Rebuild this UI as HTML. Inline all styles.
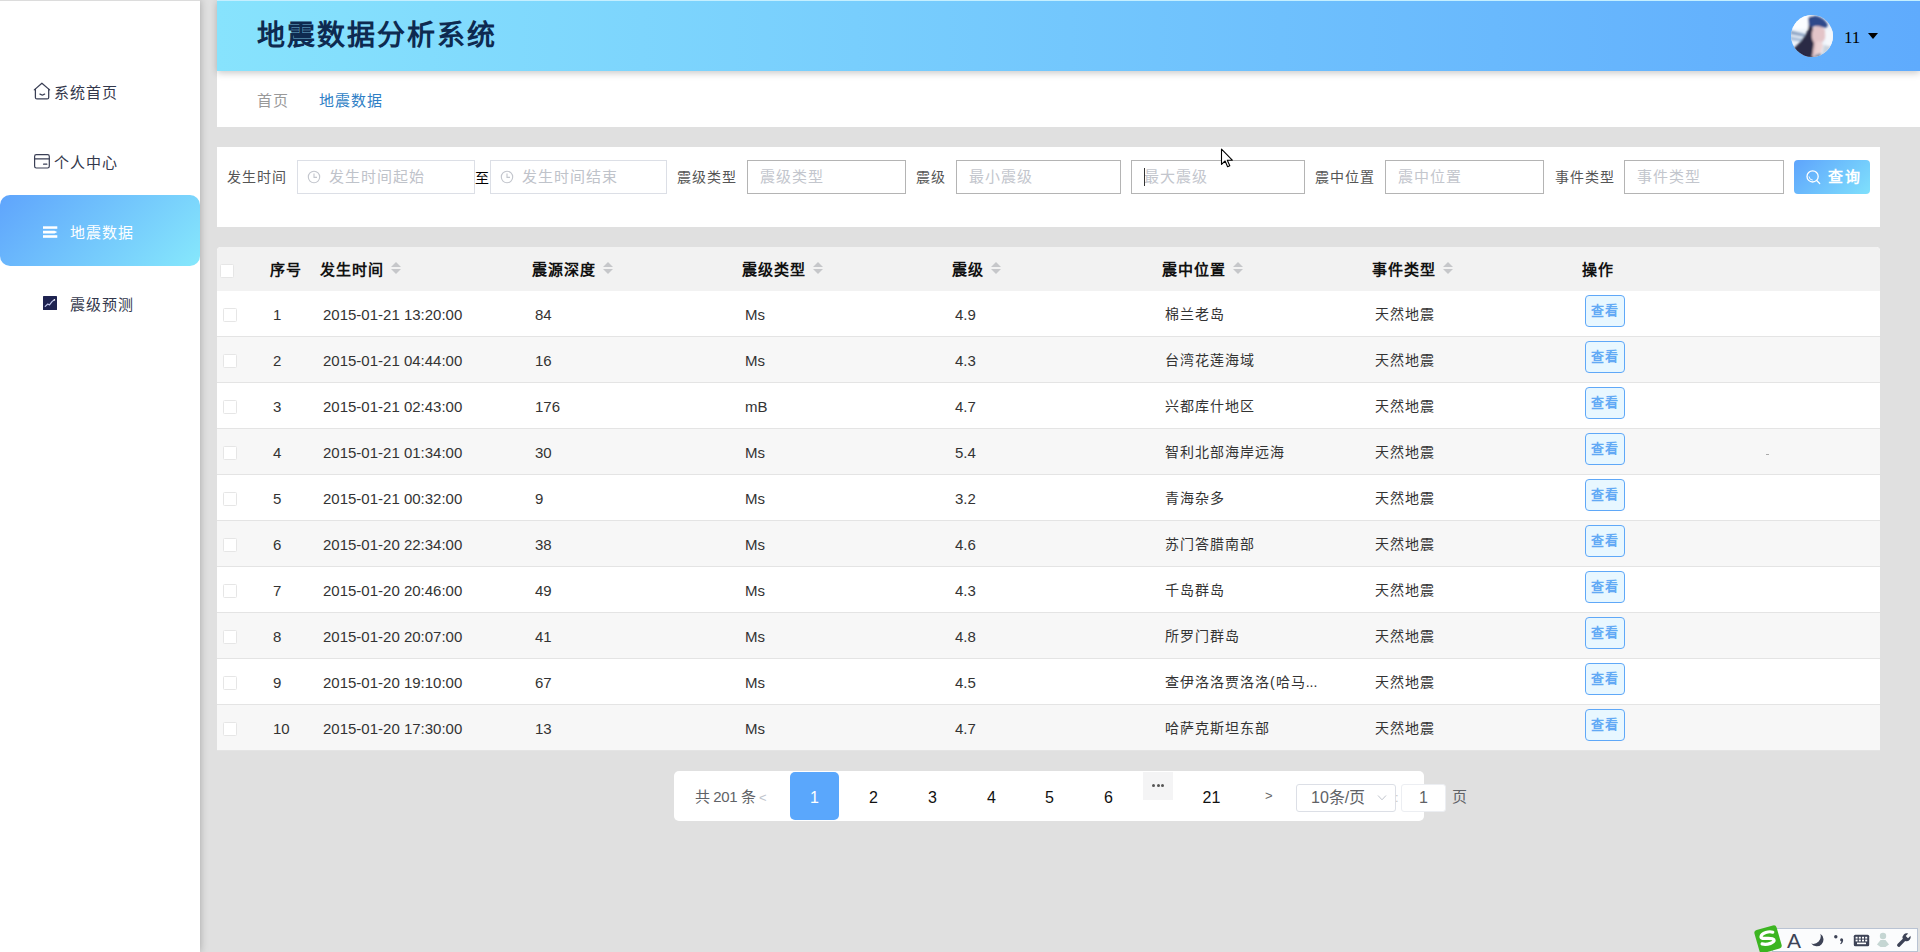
<!DOCTYPE html>
<html lang="zh-CN">
<head>
<meta charset="utf-8">
<title>地震数据分析系统</title>
<style>
*{box-sizing:border-box;margin:0;padding:0}
html,body{width:1920px;height:952px;overflow:hidden}
body{position:relative;background:#e0e0e0;font-family:"Liberation Sans",sans-serif;color:#333;font-size:15px}
.abs{position:absolute}
/* sidebar */
.side{position:absolute;left:0;top:0;width:200px;height:952px;background:#fff;box-shadow:0 0 8px rgba(0,0,0,.27)}
.side:before{content:'';position:absolute;left:0;top:0;width:200px;height:1px;background:#dcdcdc}
.mi{position:absolute;left:0;width:200px;height:71px;line-height:71px;font-size:15px;letter-spacing:1px;color:#33384c;white-space:nowrap}
.mi .tx{position:absolute;top:0}
.mi svg{position:absolute}
.mi.act{background:linear-gradient(135deg,#5fa4fc 0%,#86e8fc 100%);border-radius:10px;color:#fff}
/* header */
.hdr{position:absolute;left:217px;top:0;width:1703px;height:71px;background:linear-gradient(90deg,#87e3fd 0%,#5fabfd 100%);box-shadow:0 2px 7px rgba(0,0,0,.22);border-top:1px solid #c4efff;z-index:2}
.hdr .title{position:absolute;left:40px;top:0;height:70px;line-height:70px;font-size:28px;font-weight:bold;color:#0e2a50;white-space:nowrap;letter-spacing:2px}
.avatar{position:absolute;left:1574px;top:14px;width:42px;height:42px;border-radius:50%;overflow:hidden}
.uname{position:absolute;left:1627px;top:1px;line-height:72px;font-family:"Liberation Serif",serif;font-size:17px;color:#000}
.ucaret{position:absolute;left:1651px;top:32px;width:0;height:0;border-left:5px solid transparent;border-right:5px solid transparent;border-top:6.5px solid #000}
.crumb{position:absolute;left:217px;top:71px;width:1703px;height:56px;background:#fff;font-size:15px;letter-spacing:1px;line-height:60px;white-space:nowrap}
.crumb span{position:absolute;top:0}
/* search */
.search{position:absolute;left:217px;top:147px;width:1663px;height:80px;background:#fff}
.lbl{position:absolute;top:13px;height:34px;line-height:35px;font-size:14px;letter-spacing:1px;color:#555;white-space:nowrap}
.inp{position:absolute;top:13px;height:34px;border:1px solid #b4b4b4;background:#fff;line-height:32px;font-size:15px;letter-spacing:1px;color:#c3c6cd;padding-left:12px;white-space:nowrap;overflow:hidden}
.inp.date{border-color:#dcdfe6;padding-left:31px;line-height:31px;color:#bfc3ca}
.inp.date svg{position:absolute;left:9px;top:9px}
.qbtn{position:absolute;left:1577px;top:13px;width:76px;height:34px;border-radius:4px;background:linear-gradient(135deg,#5ea4fc 0%,#7fe0fc 100%);color:#fff;font-size:15px;letter-spacing:2px;font-weight:bold;line-height:34px;white-space:nowrap}
.qbtn svg{position:absolute;left:11px;top:9px}
.qbtn span{position:absolute;left:34px;top:0}
/* table */
.tbl{position:absolute;left:217px;top:247px;width:1663px;height:504px;background:#fff;border-radius:4px 4px 0 0;overflow:hidden}
.thead{position:absolute;left:0;top:0;width:100%;height:44px;background:#f2f2f2;line-height:46px;font-size:15px;letter-spacing:1px;font-weight:bold;color:#111}
.th{position:absolute;top:0;white-space:nowrap}
.sort{position:absolute;left:100%;top:0;margin-left:7px;width:10px;height:44px}
.sort b{position:absolute;left:0;width:0;height:0;border-left:5px solid transparent;border-right:5px solid transparent}
.sort .up{top:15px;border-bottom:5px solid #c6c7ca}
.sort .dn{top:22px;border-top:5px solid #c6c7ca}
.tr{position:absolute;left:0;width:100%;height:46px;border-bottom:1px solid #e4e4e4;line-height:47px;font-size:15px;color:#333;background:#fff}
.tr.odd{background:#f7f7f7}
.td{position:absolute;top:0;white-space:nowrap}
.td.cj{font-size:14px;letter-spacing:1px}
.td i{font-style:normal;letter-spacing:0}
.cb{position:absolute;width:14px;height:14px;border:1px solid #e6e6e6;background:#fff;border-radius:1.5px}
.hcb{left:3px;top:17px}
.rcb{left:6px;top:17px}
.btn-view{position:absolute;left:1368px;top:4px;width:40px;height:32px;border:1px solid #5fa8f8;border-radius:4px;background:#e8f7ff;color:#62a9f5;font-weight:bold;font-size:13px;letter-spacing:1px;line-height:30px;text-align:center}
/* pagination */
.pg{position:absolute;left:674px;top:771px;width:750px;height:50px;background:#fff;border-radius:5px}
.pgt{position:absolute;top:771px;height:50px;line-height:54px;font-size:16px;color:#111;white-space:nowrap;text-align:center}

</style>
</head>
<body>
<div class="side">
  <div class="mi" style="top:57px">
    <svg style="left:33px;top:25px" width="18" height="18" viewBox="0 0 18 18" fill="none" stroke="#3a3f55" stroke-width="1.25" stroke-linejoin="round" stroke-linecap="round"><path d="M1.300 7.900 8.900 1.200l7.700 6.700"/><path d="M2.400 7.200v8.200a1.500 1.500 0 0 0 1.500 1.500h10.300a1.500 1.500 0 0 0 1.500-1.500V7.200"/><path d="M6.900 12.100q2.400 1.900 4.800 0"/></svg>
    <span class="tx" style="left:54px">系统首页</span>
  </div>
  <div class="mi" style="top:128px">
    <svg style="left:33px;top:25px" width="18" height="17" viewBox="0 0 18 17" fill="none" stroke="#3a3f55" stroke-width="1.2" stroke-linejoin="round" stroke-linecap="round"><rect x="1.600" y="1.700" width="14.700" height="13.300" rx="1.700"/><path d="M1.600 5.900h14.700" stroke-width="1.400"/><path d="M10.600 11.200h3.200" stroke-width="1.300"/></svg>
    <span class="tx" style="left:54px;top:-1px">个人中心</span>
  </div>
  <div class="mi act" style="top:195px">
    <svg style="left:43px;top:31px" width="15" height="12" viewBox="0 0 15 12" fill="#fff"><rect x="0" y="0.300" width="14.300" height="2.500"/><path d="M0 4.700h11.500L14.300 6.100 11.500 7.500H0z"/><rect x="0" y="9.200" width="14.300" height="2.600"/></svg>
    <span class="tx" style="left:70px;top:2px">地震数据</span>
  </div>
  <div class="mi" style="top:269px">
    <svg style="left:43px;top:27px" width="14" height="14" viewBox="0 0 14 14"><rect x="0" y="0" width="14" height="14" rx=".6" fill="#1e2350"/><path d="M2.200 10.300 4.800 8l1.700.9 2.500-3.300 1.700-1.300" fill="none" stroke="#c3c9ee" stroke-width="1.100" stroke-linecap="round" stroke-linejoin="round"/><circle cx="11.400" cy="3.900" r=".8" fill="#fff"/></svg>
    <span class="tx" style="left:70px">震级预测</span>
  </div>
</div>
<div class="hdr">
  <div class="title">地震数据分析系统</div>
  <div class="avatar">
    <svg width="42" height="42" viewBox="0 0 42 42"><defs><filter id="bl" x="-10%" y="-10%" width="120%" height="120%"><feGaussianBlur stdDeviation="1.1"/></filter></defs><rect width="42" height="42" fill="#eef4fb"/><g filter="url(#bl)"><rect x="-2" y="-2" width="24" height="16" fill="#fbfdff"/><path d="M-2 15 14 19v3L-2 19z" fill="#8ea4c4"/><path d="M-2 21 13 24v3L-2 25z" fill="#a9bdd8"/><path d="M17 3c4-4 15-3 20 7l-2 3-11-2-6 3z" fill="#2f4a8a"/><path d="M18 10c-1 8-7 16-16 24l-3 10h24l1-18-2-13z" fill="#2b2a45"/><path d="M23 12c5-2 11 0 12 6 0 5-2 8-5 10l1 6-4 8h-6l2-14c-3-4-3-11 0-16z" fill="#e3c4c8"/><path d="M26 26c3 0 6 2 6 5l-3 9h-5z" fill="#ecd3d4"/><path d="M-2 34c8 3 16 6 22 10H-2z" fill="#161d45"/><path d="M34 16l10-2v30H32l3-10z" fill="#f5f8fc"/><path d="M33 30l10 2v12H30z" fill="#c9d3de"/><path d="M24 40l6-2v6h-7z" fill="#8a94a8"/></g></svg>
  </div>
  <div class="uname">11</div>
  <div class="ucaret"></div>
</div>
<div class="crumb"><span style="left:40px;color:#999">首页</span><span style="left:102px;color:#2f7fc6">地震数据</span></div>
<div class="search">
  <span class="lbl" style="left:10px">发生时间</span>
  <div class="inp date" style="left:80px;width:178px"><svg width="14" height="14" viewBox="0 0 14 14" fill="none" stroke="#c3c6cd" stroke-width="1.1"><circle cx="7" cy="7" r="5.7"/><path d="M7 3.6V7.4H10"/></svg>发生时间起始</div>
  <span class="lbl" style="left:258px;color:#000;font-size:14px;letter-spacing:0;line-height:37px">至</span>
  <div class="inp date" style="left:273px;width:177px"><svg width="14" height="14" viewBox="0 0 14 14" fill="none" stroke="#c3c6cd" stroke-width="1.1"><circle cx="7" cy="7" r="5.7"/><path d="M7 3.6V7.4H10"/></svg>发生时间结束</div>
  <span class="lbl" style="left:460px">震级类型</span>
  <div class="inp" style="left:530px;width:159px">震级类型</div>
  <span class="lbl" style="left:699px">震级</span>
  <div class="inp" style="left:739px;width:165px">最小震级</div>
  <div class="inp" style="left:914px;width:174px">最大震级<i style="position:absolute;left:12px;top:7px;width:1px;height:18px;background:#333"></i></div>
  <span class="lbl" style="left:1098px">震中位置</span>
  <div class="inp" style="left:1168px;width:159px">震中位置</div>
  <span class="lbl" style="left:1338px">事件类型</span>
  <div class="inp" style="left:1407px;width:160px">事件类型</div>
  <div class="qbtn"><svg width="18" height="18" viewBox="0 0 18 18" fill="none" stroke="#fff" stroke-width="1.300" stroke-linecap="round"><circle cx="7.600" cy="7.400" r="5.600"/><path d="M11.700 11.500 14.700 14.500"/><path d="M4 7.800a3.600 3.600 0 0 0 3.400 3.300" stroke-width=".9"/></svg><span>查询</span></div>
</div>
<div class="tbl">
<div class="thead"><span class="cb hcb"></span><span class="th" style="left:53px">序号</span><span class="th" style="left:103px">发生时间<i class="sort"><b class="up"></b><b class="dn"></b></i></span><span class="th" style="left:315px">震源深度<i class="sort"><b class="up"></b><b class="dn"></b></i></span><span class="th" style="left:525px">震级类型<i class="sort"><b class="up"></b><b class="dn"></b></i></span><span class="th" style="left:735px">震级<i class="sort"><b class="up"></b><b class="dn"></b></i></span><span class="th" style="left:945px">震中位置<i class="sort"><b class="up"></b><b class="dn"></b></i></span><span class="th" style="left:1155px">事件类型<i class="sort"><b class="up"></b><b class="dn"></b></i></span><span class="th" style="left:1365px">操作</span></div>
<div class="tr" style="top:44px"><span class="cb rcb"></span><span class="td" style="left:56px">1</span><span class="td" style="left:106px">2015-01-21 13:20:00</span><span class="td" style="left:318px">84</span><span class="td" style="left:528px">Ms</span><span class="td" style="left:738px">4.9</span><span class="td cj" style="left:948px">棉兰老岛</span><span class="td cj" style="left:1158px">天然地震</span><span class="btn-view">查看</span></div>
<div class="tr odd" style="top:90px"><span class="cb rcb"></span><span class="td" style="left:56px">2</span><span class="td" style="left:106px">2015-01-21 04:44:00</span><span class="td" style="left:318px">16</span><span class="td" style="left:528px">Ms</span><span class="td" style="left:738px">4.3</span><span class="td cj" style="left:948px">台湾花莲海域</span><span class="td cj" style="left:1158px">天然地震</span><span class="btn-view">查看</span></div>
<div class="tr" style="top:136px"><span class="cb rcb"></span><span class="td" style="left:56px">3</span><span class="td" style="left:106px">2015-01-21 02:43:00</span><span class="td" style="left:318px">176</span><span class="td" style="left:528px">mB</span><span class="td" style="left:738px">4.7</span><span class="td cj" style="left:948px">兴都库什地区</span><span class="td cj" style="left:1158px">天然地震</span><span class="btn-view">查看</span></div>
<div class="tr odd" style="top:182px"><span class="cb rcb"></span><span class="td" style="left:56px">4</span><span class="td" style="left:106px">2015-01-21 01:34:00</span><span class="td" style="left:318px">30</span><span class="td" style="left:528px">Ms</span><span class="td" style="left:738px">5.4</span><span class="td cj" style="left:948px">智利北部海岸远海</span><span class="td cj" style="left:1158px">天然地震</span><span class="btn-view">查看</span></div>
<div class="tr" style="top:228px"><span class="cb rcb"></span><span class="td" style="left:56px">5</span><span class="td" style="left:106px">2015-01-21 00:32:00</span><span class="td" style="left:318px">9</span><span class="td" style="left:528px">Ms</span><span class="td" style="left:738px">3.2</span><span class="td cj" style="left:948px">青海杂多</span><span class="td cj" style="left:1158px">天然地震</span><span class="btn-view">查看</span></div>
<div class="tr odd" style="top:274px"><span class="cb rcb"></span><span class="td" style="left:56px">6</span><span class="td" style="left:106px">2015-01-20 22:34:00</span><span class="td" style="left:318px">38</span><span class="td" style="left:528px">Ms</span><span class="td" style="left:738px">4.6</span><span class="td cj" style="left:948px">苏门答腊南部</span><span class="td cj" style="left:1158px">天然地震</span><span class="btn-view">查看</span></div>
<div class="tr" style="top:320px"><span class="cb rcb"></span><span class="td" style="left:56px">7</span><span class="td" style="left:106px">2015-01-20 20:46:00</span><span class="td" style="left:318px">49</span><span class="td" style="left:528px">Ms</span><span class="td" style="left:738px">4.3</span><span class="td cj" style="left:948px">千岛群岛</span><span class="td cj" style="left:1158px">天然地震</span><span class="btn-view">查看</span></div>
<div class="tr odd" style="top:366px"><span class="cb rcb"></span><span class="td" style="left:56px">8</span><span class="td" style="left:106px">2015-01-20 20:07:00</span><span class="td" style="left:318px">41</span><span class="td" style="left:528px">Ms</span><span class="td" style="left:738px">4.8</span><span class="td cj" style="left:948px">所罗门群岛</span><span class="td cj" style="left:1158px">天然地震</span><span class="btn-view">查看</span></div>
<div class="tr" style="top:412px"><span class="cb rcb"></span><span class="td" style="left:56px">9</span><span class="td" style="left:106px">2015-01-20 19:10:00</span><span class="td" style="left:318px">67</span><span class="td" style="left:528px">Ms</span><span class="td" style="left:738px">4.5</span><span class="td cj" style="left:948px">查伊洛洛贾洛洛(哈马<i>...</i></span><span class="td cj" style="left:1158px">天然地震</span><span class="btn-view">查看</span></div>
<div class="tr odd" style="top:458px"><span class="cb rcb"></span><span class="td" style="left:56px">10</span><span class="td" style="left:106px">2015-01-20 17:30:00</span><span class="td" style="left:318px">13</span><span class="td" style="left:528px">Ms</span><span class="td" style="left:738px">4.7</span><span class="td cj" style="left:948px">哈萨克斯坦东部</span><span class="td cj" style="left:1158px">天然地震</span><span class="btn-view">查看</span></div>
</div>
<div class="pg"></div>
<span class="pgt" style="left:695px;color:#606266;font-size:15px;letter-spacing:-.4px;line-height:52px">共 201 条</span>
<span class="pgt" style="left:759px;color:#c0c4cc;font-size:13px">&lt;</span>
<span class="pgt" style="left:790px;top:772px;width:49px;height:48px;line-height:52px;background:#5aa7fc;color:#fff;border-radius:5px">1</span>
<span class="pgt" style="left:849px;width:49px">2</span>
<span class="pgt" style="left:908px;width:49px">3</span>
<span class="pgt" style="left:967px;width:49px">4</span>
<span class="pgt" style="left:1025px;width:49px">5</span>
<span class="pgt" style="left:1084px;width:49px">6</span>
<span class="abs" style="left:1143px;top:772px;width:30px;height:28px;background:#f4f4f5"><i class="abs" style="left:9px;top:12px;width:3px;height:3px;border-radius:50%;background:#555"></i><i class="abs" style="left:13.5px;top:12px;width:3px;height:3px;border-radius:50%;background:#555"></i><i class="abs" style="left:18px;top:12px;width:3px;height:3px;border-radius:50%;background:#555"></i></span>
<span class="pgt" style="left:1187px;width:49px">21</span>
<span class="pgt" style="left:1265px;color:#666;font-size:13px;line-height:50px">&gt;</span>
<div class="abs" style="left:1296px;top:784px;width:100px;height:28px;border:1px solid #dcdfe6;border-radius:3px;background:#fff;color:#606266;font-size:16px;line-height:25px;padding-left:14px;white-space:nowrap">10条/页<svg class="abs" style="left:80px;top:9px" width="10" height="8" viewBox="0 0 10 8" fill="none" stroke="#c0c4cc" stroke-width="1"><path d="M1 1.5 5 5.8 9 1.5"/></svg></div>
<span class="abs" style="left:1395px;top:790px;color:#c8c8c8;font-size:13px">:</span>
<div class="abs" style="left:1401px;top:784px;width:45px;height:28px;border-radius:3px;border:1px solid #eceef2;background:#fff;color:#606266;font-size:16px;line-height:25px;text-align:center">1</div>
<span class="abs" style="left:1452px;top:771px;line-height:52px;color:#606266;font-size:15px">页</span>
<!-- stray mark -->
<i class="abs" style="left:1766px;top:454px;width:3px;height:1px;background:#aaa"></i>
<!-- cursor -->
<svg class="abs" style="left:1220px;top:148px" width="14" height="21" viewBox="0 0 14 21"><path d="M1.5 1.2v15.2l3.6-3.4 2.5 5.8 2.2-1-2.5-5.6h5z" fill="#fff" stroke="#000" stroke-width="1.1" stroke-linejoin="round"/></svg>
<!-- IME bar -->
<div class="abs" style="left:1772px;top:928px;width:146px;height:24px;background:#fbfcfd;border:1px solid #b9c3d3"></div>
<svg class="abs" style="left:1751px;top:921px" width="32" height="31" viewBox="0 0 32 30"><g transform="rotate(-16 16 16)"><rect x="5" y="6" width="23" height="24" rx="3" fill="#3cb521"/><path d="M23 12.5c-3-2.2-11-2.6-12.5 1-1.4 3.6 10.500 3 11.500 6.500.9 3.200-8 3.500-12.500.8" fill="none" stroke="#fff" stroke-width="3.200" stroke-linecap="round"/></g></svg>
<span class="abs" style="left:1787px;top:929px;font-size:21px;line-height:24px;color:#3d4356">A</span>
<svg class="abs" style="left:1810px;top:932px" width="16" height="16" viewBox="0 0 16 16"><path d="M10.300 1.800A6.800 6.800 0 1 1 1.200 11.600 7.600 7.600 0 0 0 10.300 1.800z" fill="#3d4356"/></svg>
<svg class="abs" style="left:1832px;top:933px" width="14" height="14" viewBox="0 0 14 14" fill="#3d4356"><circle cx="3.800" cy="3.700" r="1.700"/><path d="M9.500 5.300a1.650 1.650 0 0 1 1.650 1.650c0 1.900-.9 3.300-2.300 4.300l-.7-.7c.8-.7 1.200-1.300 1.300-2a1.650 1.650 0 0 1 .05-3.250z"/></svg>
<svg class="abs" style="left:1853px;top:934px" width="17" height="13" viewBox="0 0 17 13"><rect x=".8" y=".8" width="15.400" height="11.400" rx="1.500" fill="#3d4356"/><g fill="#fff"><rect x="2.600" y="2.800" width="2" height="1.800"/><rect x="5.800" y="2.800" width="2" height="1.800"/><rect x="9" y="2.800" width="2" height="1.800"/><rect x="12.200" y="2.800" width="2" height="1.800"/><rect x="2.600" y="5.600" width="2" height="1.800"/><rect x="5.800" y="5.600" width="2" height="1.800"/><rect x="9" y="5.600" width="2" height="1.800"/><rect x="12.200" y="5.600" width="2" height="1.800"/><rect x="4" y="8.600" width="9" height="1.600"/></g></svg>
<svg class="abs" style="left:1876px;top:931px" width="14" height="18" viewBox="0 0 14 18" fill="#c5d6d3"><circle cx="7" cy="5" r="3.200"/><path d="M1 13.500 4.500 9h5L13 13.500 9.500 16h-5z"/></svg>
<svg class="abs" style="left:1896px;top:932px" width="16" height="16" viewBox="0 0 16 16"><path d="M14.500 3.800 12 6.300 9.700 4 12.200 1.500a4.200 4.200 0 0 0-5.400 5.300L1.500 12a1.700 1.700 0 0 0 2.400 2.400l5.300-5.300a4.200 4.200 0 0 0 5.300-5.300z" fill="#3d4356"/></svg>
</body>
</html>
